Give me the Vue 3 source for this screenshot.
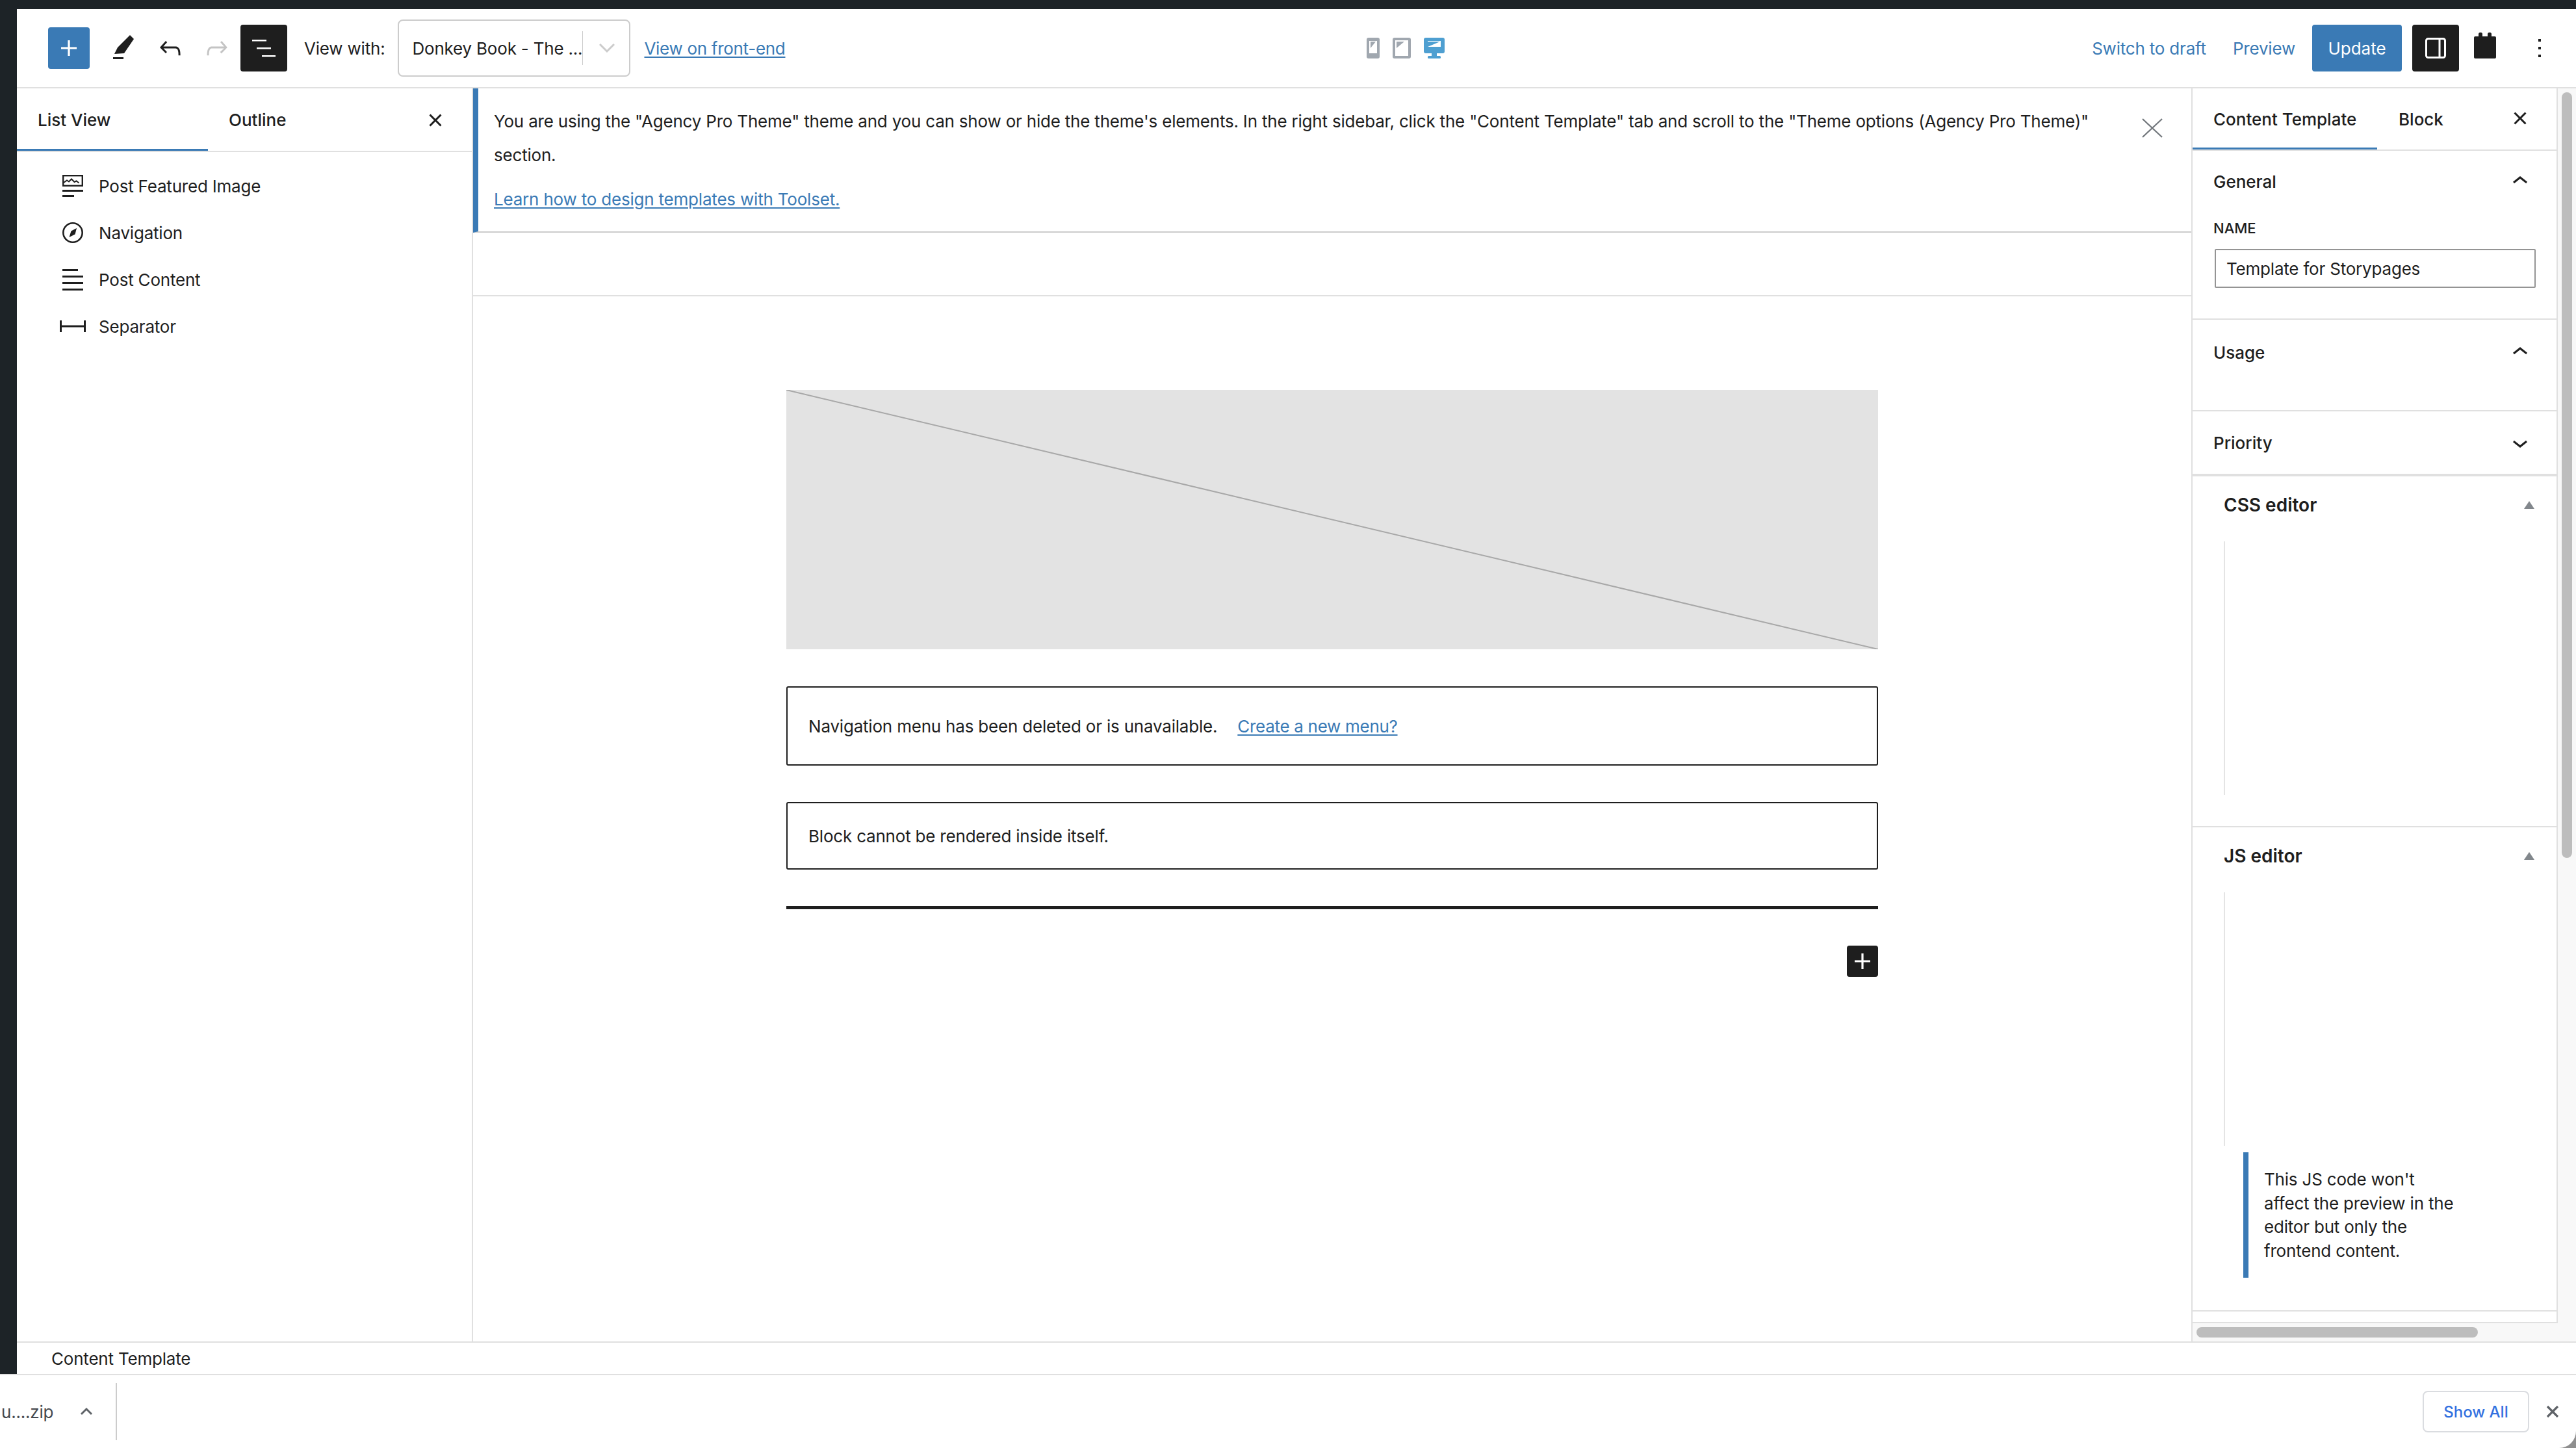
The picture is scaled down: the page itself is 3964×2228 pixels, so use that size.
<script setup>
const listItems = [
  { id: 'image', label: 'Post Featured Image' },
  { id: 'nav', label: 'Navigation' },
  { id: 'content', label: 'Post Content' },
  { id: 'sep', label: 'Separator' },
]
</script>

<template>
  <div class="window">
    <div class="top-strip" />
    <div class="middle">
      <div class="rail" />
      <div class="editor">
        <header class="toolbar">
          <div class="tools">
            <button class="inserter" type="button" aria-label="Add block">
              <svg width="48" height="48" viewBox="0 0 24 24" fill="#fff"><path d="M18 11.200h-5.200V6h-1.600v5.200H6v1.600h5.200V18h1.600v-5.200H18z" /></svg>
            </button>
            <svg class="tool tool--pen" width="48" height="48" viewBox="0 0 24 24" fill="#1e1e1e"><path d="M17 2l3 3-7.500 11-7.500.5 2.500-5z" /><rect x="4" y="19" width="8" height="1.500" /></svg>
            <svg class="tool" width="48" height="48" viewBox="0 0 24 24" fill="#1e1e1e"><path d="M18.300 11.700c-.6-.6-1.400-.9-2.300-.9H6.700l2.900-3.300-1.100-1-4.500 5L8.500 16l1-1-2.700-2.700H16c.5 0 .9.2 1.300.5 1 1 1 3.400 1 4.500v.3h1.500v-.2c0-1.500 0-4.300-1.500-5.700z" /></svg>
            <svg class="tool" width="48" height="48" viewBox="0 0 24 24" fill="#c4c4c4"><path d="M15.600 6.500l-1.100 1 2.900 3.300H8c-.9 0-1.700.3-2.300.9-1.400 1.500-1.400 4.200-1.400 5.700v.2h1.500v-.3c0-1.100 0-3.500 1-4.500.3-.3.7-.5 1.300-.5h9.200L14.300 15l1.100 1.100 4.500-4.600-4.300-5z" /></svg>
            <button class="dark-btn dark-btn--list" type="button" aria-label="List view">
              <svg width="72" height="72" viewBox="0 0 72 72" fill="#fff">
                <rect x="18" y="23" width="22" height="2.500" />
                <rect x="25" y="35" width="22" height="2.500" />
                <rect x="33" y="47" width="21" height="2.500" />
              </svg>
            </button>
            <span class="view-with">View with:</span>
            <div class="select">
              <span class="select__value">Donkey Book - The ...</span>
              <span class="select__divider" />
              <svg width="24" height="16" viewBox="0 0 24 16" fill="none" stroke="#ccc" stroke-width="3"><path d="M1 2l11 11L23 2" /></svg>
            </div>
            <a class="link view-front" href="#">View on front-end</a>
          </div>

          <div class="devices">
            <svg width="20" height="32" viewBox="0 0 20 32"><rect width="20" height="32" rx="3" fill="#a0a7af" /><rect x="4" y="5" width="12" height="19" fill="#fff" /><path d="M6 6h8l-8 10z" fill="#a0a7af" /></svg>
            <svg width="28" height="32" viewBox="0 0 28 32"><rect width="28" height="32" rx="3" fill="#a0a7af" /><rect x="4" y="4" width="20" height="24" fill="#fff" /><path d="M6 6h12L6 16z" fill="#a0a7af" /></svg>
            <svg width="32" height="32" viewBox="0 0 32 32" fill="#4e9fd1"><rect width="32" height="24" rx="3" /><rect x="6" y="5" width="20" height="9" fill="#fff" /><path d="M6 6h19L6 14z" /><rect x="12" y="24" width="8" height="5" /><rect x="6" y="28" width="20" height="4" rx="1.500" /></svg>
          </div>

          <div class="actions">
            <a class="action-link" href="#">Switch to draft</a>
            <a class="action-link action-link--preview" href="#">Preview</a>
            <button class="update" type="button">Update</button>
            <button class="dark-btn dark-btn--sidebar" type="button" aria-label="Settings">
              <svg width="72" height="72" viewBox="0 0 72 72" fill="none" stroke="#fff" stroke-width="3"><rect x="21.500" y="21.500" width="29" height="29" rx="3" /><path d="M42 21v30" /></svg>
            </button>
            <svg class="plugin" width="34" height="40" viewBox="0 0 34 40" fill="#1e1e1e"><rect x="7" y="0" width="6" height="10" rx="2.500" /><rect x="21" y="0" width="6" height="10" rx="2.500" /><rect x="0" y="6" width="34" height="34" rx="2" /></svg>
            <svg class="dots" width="4" height="28" viewBox="0 0 4 28" fill="#1e1e1e"><rect width="4" height="4" /><rect y="12" width="4" height="4" /><rect y="24" width="4" height="4" /></svg>
          </div>
        </header>

        <div class="workspace">
          <aside class="left-panel">
            <div class="left-tabs">
              <span class="left-tab left-tab--active">List View</span>
              <span class="left-tab">Outline</span>
              <svg class="left-close" width="48" height="48" viewBox="0 0 24 24" fill="#1e1e1e"><path d="M12 13.060l3.712 3.713 1.061-1.060L13.061 12l3.712-3.712-1.060-1.060L12 10.938 8.288 7.227l-1.061 1.060L10.939 12l-3.712 3.712 1.060 1.061L12 13.061z" /></svg>
            </div>
            <ul class="outline">
              <li v-for="item in listItems" :key="item.id" class="outline__row">
                <span class="outline__icon">
                  <svg v-if="item.id === 'image'" width="32" height="34" viewBox="0 0 32 34" fill="#1e1e1e">
                    <rect x="1.200" y="1.200" width="29.600" height="15.600" fill="none" stroke="#1e1e1e" stroke-width="2.400" />
                    <path d="M2 12l5-3.500 3 2 4-4 4.500 4.500 3-1.500 4 3" fill="none" stroke="#1e1e1e" stroke-width="2" />
                    <rect y="23" width="32" height="3" />
                    <rect y="31" width="18" height="3" />
                  </svg>
                  <svg v-else-if="item.id === 'nav'" width="32" height="32" viewBox="0 0 32 32" fill="#1e1e1e">
                    <circle cx="16" cy="16" r="14.700" fill="none" stroke="#1e1e1e" stroke-width="2.600" />
                    <path d="M22 9l-2.500 9.500L10.500 23l3-9.500z" />
                  </svg>
                  <svg v-else-if="item.id === 'content'" width="32" height="33" viewBox="0 0 32 33" fill="#1e1e1e">
                    <rect width="24" height="3" />
                    <rect y="10" width="32" height="3" />
                    <rect y="20" width="32" height="3" />
                    <rect y="30" width="32" height="3" />
                  </svg>
                  <svg v-else width="40" height="18" viewBox="0 0 40 18" fill="#1e1e1e">
                    <rect width="3" height="18" />
                    <rect x="37" width="3" height="18" />
                    <rect y="7.500" width="40" height="3" />
                  </svg>
                </span>
                <span>{{ item.label }}</span>
              </li>
            </ul>
          </aside>

          <main class="canvas">
            <div class="notice">
              <div class="notice__body">
                <p class="notice__text">You are using the "Agency Pro Theme" theme and you can show or hide the theme's elements. In the right sidebar, click the "Content Template" tab and scroll to the "Theme options (Agency Pro Theme)" section.</p>
                <a class="link notice__link" href="#">Learn how to design templates with Toolset.</a>
              </div>
              <svg class="notice__close" width="32" height="30" viewBox="0 0 32 30" stroke="#72777c" stroke-width="2.200"><path d="M1 1l30 28M31 1L1 29" /></svg>
            </div>
            <div class="strip" />
            <div class="page">
              <div class="placeholder">
                <svg width="100%" height="100%" viewBox="0 0 100 100" preserveAspectRatio="none"><path d="M0 0L100 100" stroke="#a8a8a8" stroke-width="2" vector-effect="non-scaling-stroke" /></svg>
              </div>
              <div class="warning warning--nav">
                <span>Navigation menu has been deleted or is unavailable.</span>
                <a class="link warning__link" href="#">Create a new menu?</a>
              </div>
              <div class="warning warning--self">Block cannot be rendered inside itself.</div>
              <div class="separator" />
              <button class="block-add" type="button" aria-label="Add block">
                <svg width="48" height="48" viewBox="0 0 24 24" fill="#fff"><path d="M18 11.200h-5.200V6h-1.600v5.200H6v1.600h5.200V18h1.600v-5.200H18z" /></svg>
              </button>
            </div>
          </main>

          <aside class="right-panel">
            <div class="right-main">
              <div class="settings">
                <div class="right-tabs">
                  <span class="right-tab right-tab--active">Content Template</span>
                  <span class="right-tab right-tab--block">Block</span>
                  <svg class="right-close" width="48" height="48" viewBox="0 0 24 24" fill="#1e1e1e"><path d="M12 13.060l3.712 3.713 1.061-1.060L13.061 12l3.712-3.712-1.060-1.060L12 10.938 8.288 7.227l-1.061 1.060L10.939 12l-3.712 3.712 1.060 1.061L12 13.061z" /></svg>
                </div>

                <section class="section section--general">
                  <div class="section__head">
                    <span>General</span>
                    <svg width="48" height="48" viewBox="0 0 24 24" fill="#1e1e1e"><path d="M6.500 12.400L12 8l5.500 4.400-.9 1.200L12 10l-4.500 3.600-1-1.200z" /></svg>
                  </div>
                  <label class="field-label">NAME</label>
                  <div class="field">Template for Storypages</div>
                </section>

                <section class="section section--usage">
                  <div class="section__head">
                    <span>Usage</span>
                    <svg width="48" height="48" viewBox="0 0 24 24" fill="#1e1e1e"><path d="M6.500 12.400L12 8l5.500 4.400-.9 1.200L12 10l-4.500 3.600-1-1.200z" /></svg>
                  </div>
                </section>

                <section class="section section--priority">
                  <div class="section__head">
                    <span>Priority</span>
                    <svg width="48" height="48" viewBox="0 0 24 24" fill="#1e1e1e"><path d="M17.500 11.600L12 16l-5.500-4.400.9-1.200L12 14l4.500-3.600 1 1.200z" /></svg>
                  </div>
                </section>

                <section class="metabox metabox--css">
                  <div class="metabox__head">
                    <span>CSS editor</span>
                    <i class="metabox__arrow" />
                  </div>
                  <div class="code-area" />
                </section>

                <section class="metabox metabox--js">
                  <div class="metabox__head">
                    <span>JS editor</span>
                    <i class="metabox__arrow" />
                  </div>
                  <div class="code-area" />
                  <p class="js-note">This JS code won't affect the preview in the editor but only the frontend content.</p>
                </section>

                <div class="clipped-row" />
              </div>
              <div class="v-track"><div class="v-thumb" /></div>
            </div>
            <div class="h-track"><div class="h-thumb" /></div>
          </aside>
        </div>

        <footer class="breadcrumb">Content Template</footer>
      </div>
    </div>

    <div class="downloads">
      <span class="downloads__file">u....zip</span>
      <svg class="downloads__chevron" width="20" height="14" viewBox="0 0 20 14" fill="none" stroke="#5f6368" stroke-width="3"><path d="M2 11l8-8 8 8" /></svg>
      <span class="downloads__divider" />
      <button class="show-all" type="button">Show All</button>
      <svg class="downloads__close" width="20" height="20" viewBox="0 0 20 20" stroke="#5f6368" stroke-width="3.200"><path d="M2 2l16 16M18 2L2 18" /></svg>
    </div>
  </div>
</template>

<style scoped>
.window {
  display: flex;
  flex-direction: column;
  width: 3964px;
  height: 2228px;
  overflow: hidden;
  background: #8f8f8f;
  color: #1e1e1e;
  font-family: Inter, "Liberation Sans", sans-serif;
  font-size: 26px;
  letter-spacing: -0.2px;
}

button {
  padding: 0;
  border: none;
  font: inherit;
  cursor: pointer;
}

a {
  text-decoration: none;
}

.top-strip {
  flex: none;
  height: 14px;
  background: #1d2327;
}

.middle {
  display: flex;
  flex: 1;
  min-height: 0;
}

.rail {
  flex: none;
  width: 26px;
  background: #1d2327;
}

.editor {
  display: flex;
  flex: 1;
  flex-direction: column;
  min-width: 0;
  background: #fff;
}

.toolbar {
  display: grid;
  flex: none;
  grid-template-columns: 2029px 120px 1fr;
  align-items: center;
  height: 122px;
  padding-left: 48px;
  border-bottom: 2px solid #e0e0e0;
  box-sizing: border-box;
}

.tools {
  display: flex;
  align-items: center;
}

.inserter {
  display: flex;
  align-items: center;
  justify-content: center;
  width: 64px;
  height: 64px;
  margin-right: 28px;
  border-radius: 4px;
  background: #3a7ab5;
}

.tool {
  flex: none;
  margin-right: 24px;
}

.tool:nth-of-type(3) {
  margin-right: 12px;
}

.dark-btn {
  display: flex;
  flex: none;
  width: 72px;
  height: 72px;
  border-radius: 4px;
  background: #1e1e1e;
}

.view-with {
  margin-left: 26px;
  white-space: nowrap;
}

.select {
  display: flex;
  flex: none;
  align-items: center;
  box-sizing: border-box;
  width: 358px;
  height: 88px;
  margin-left: 20px;
  padding-left: 20px;
  border: 2px solid #ccc;
  border-radius: 8px;
}

.select__value {
  width: 262px;
  white-space: nowrap;
}

.select__divider {
  width: 1px;
  height: 52px;
  margin-right: 25px;
  background: #ccc;
}

.link {
  color: #3a7ab5;
  text-decoration: underline;
  text-underline-offset: 3px;
}

.view-front {
  margin-left: 21px;
  letter-spacing: -0.3px;
  white-space: nowrap;
}

.devices {
  display: flex;
  align-items: center;
  gap: 20px;
}

.actions {
  display: flex;
  align-items: center;
  justify-content: flex-end;
  padding-right: 54px;
}

.action-link {
  color: #3a7ab5;
  white-space: nowrap;
}

.action-link--preview {
  margin-left: 41px;
}

.update {
  width: 138px;
  height: 72px;
  margin-left: 26px;
  border-radius: 4px;
  background: #3a7ab5;
  color: #fff;
}

.dark-btn--sidebar {
  margin-left: 16px;
}

.plugin {
  flex: none;
  margin-left: 23px;
  transform: translateY(-4px);
}

.dots {
  flex: none;
  margin-left: 65px;
}

.workspace {
  display: flex;
  flex: 1;
  min-height: 0;
}

.left-panel {
  flex: none;
  box-sizing: border-box;
  width: 702px;
  border-right: 2px solid #e0e0e0;
}

.left-tabs {
  position: relative;
  display: flex;
  height: 98px;
  border-bottom: 2px solid #e0e0e0;
  box-sizing: border-box;
}

.left-tab {
  box-sizing: border-box;
  width: 294px;
  height: 96px;
  padding: 34px 0 0 32px;
  font-weight: 500;
  letter-spacing: 0;
  line-height: 30px;
}

.left-tab--active {
  border-bottom: 3px solid #3a7ab5;
}

.left-close {
  position: absolute;
  top: 25px;
  left: 620px;
}

.outline {
  margin: 0;
  padding: 16px 0 0 66px;
  list-style: none;
}

.outline__row {
  display: flex;
  align-items: center;
  gap: 20px;
  height: 72px;
}

.outline__icon {
  display: flex;
  align-items: center;
  justify-content: center;
  width: 40px;
}

.canvas {
  flex: 1;
  min-width: 0;
}

.notice {
  display: flex;
  justify-content: space-between;
  box-sizing: border-box;
  height: 222px;
  padding: 25px 44px 0 24px;
  border-left: 8px solid #3a7ab5;
  border-bottom: 2px solid #ccc;
}

.notice__body {
  width: 2500px;
}

.notice__text {
  margin: 0 0 16px;
  line-height: 52px;
}

.notice__link {
  line-height: 52px;
}

.notice__close {
  margin-top: 21px;
}

.strip {
  height: 98px;
  box-sizing: border-box;
  border-bottom: 2px solid #e0e0e0;
}

.page {
  display: flex;
  flex-direction: column;
  width: 1680px;
  margin: 0 auto;
  padding-top: 144px;
}

.placeholder {
  height: 399px;
  background: #e3e3e3;
}

.placeholder svg {
  display: block;
}

.warning {
  display: flex;
  align-items: center;
  box-sizing: border-box;
  padding-left: 32px;
  border: 2px solid #1e1e1e;
  border-radius: 3px;
}

.warning--nav {
  height: 122px;
  margin-top: 57px;
}

.warning--self {
  height: 104px;
  margin-top: 56px;
}

.warning__link {
  margin-left: 31px;
  letter-spacing: -0.3px;
}

.separator {
  height: 5px;
  margin-top: 56px;
  background: #1e1e1e;
}

.block-add {
  display: flex;
  align-self: flex-end;
  width: 48px;
  height: 48px;
  margin-top: 56px;
  border-radius: 4px;
  background: #1e1e1e;
}

.right-panel {
  display: flex;
  flex: none;
  flex-direction: column;
  box-sizing: border-box;
  width: 592px;
  border-left: 2px solid #e0e0e0;
}

.right-main {
  display: flex;
  flex: 1;
  min-height: 0;
}

.settings {
  flex: none;
  box-sizing: border-box;
  width: 562px;
  border-right: 2px solid #e0e0e0;
  border-bottom: 2px solid #e0e0e0;
}

.right-tabs {
  position: relative;
  display: flex;
  box-sizing: border-box;
  height: 96px;
  border-bottom: 2px solid #e0e0e0;
}

.right-tab {
  box-sizing: border-box;
  height: 94px;
  padding-top: 33px;
  font-weight: 500;
  letter-spacing: 0;
  line-height: 30px;
}

.right-tab--active {
  width: 284px;
  padding-left: 32px;
  border-bottom: 3px solid #3a7ab5;
}

.right-tab--block {
  padding-left: 33px;
}

.right-close {
  position: absolute;
  top: 22px;
  right: 32px;
}

.section {
  box-sizing: border-box;
  padding: 0 32px;
  border-bottom: 2px solid #e0e0e0;
}

.section--general {
  height: 260px;
}

.section--usage {
  height: 141px;
  padding-top: 3px;
}

.section--priority {
  height: 100px;
  padding-top: 1px;
  border-bottom-width: 4px;
}

.section__head {
  display: flex;
  align-items: center;
  justify-content: space-between;
  height: 94px;
  font-weight: 500;
  letter-spacing: 0;
}

.field-label {
  display: block;
  margin-top: 12px;
  font-size: 22px;
  font-weight: 500;
  letter-spacing: 0;
  line-height: 26px;
}

.field {
  box-sizing: border-box;
  width: 494px;
  height: 60px;
  margin: 19px 0 0 2px;
  padding-left: 16px;
  border: 2px solid #949494;
  border-radius: 2px;
  line-height: 58px;
  white-space: nowrap;
}

.metabox {
  box-sizing: border-box;
  padding: 0 0 0 48px;
}

.metabox--css {
  height: 540px;
  border-bottom: 2px solid #e0e0e0;
}

.metabox--js {
  height: 745px;
  border-bottom: 2px solid #e0e0e0;
}

.metabox__head {
  display: flex;
  align-items: center;
  justify-content: space-between;
  height: 88px;
  padding-right: 34px;
  font-size: 28px;
  font-weight: 600;
  letter-spacing: 0;
}

.metabox__arrow {
  width: 0;
  height: 0;
  border-right: 8px solid transparent;
  border-bottom: 12px solid #82878c;
  border-left: 8px solid transparent;
}

.code-area {
  width: 2px;
  height: 390px;
  margin-top: 12px;
  background: #e4e4e4;
}

.js-note {
  box-sizing: border-box;
  width: 330px;
  height: 193px;
  margin: 10px 0 0 30px;
  padding: 24px 0 0 24px;
  border-left: 8px solid #3a7ab5;
  line-height: 36.500px;
}

.clipped-row {
  height: 14px;
}

.v-track {
  flex: 1;
  padding: 6px 6px 0;
  background: #f8f8f8;
}

.v-thumb {
  height: 1178px;
  border-radius: 8px;
  background: #bdbdbd;
}

.h-track {
  flex: none;
  height: 28px;
  padding: 6px 0 0 6px;
  box-sizing: border-box;
  background: #f8f8f8;
}

.h-thumb {
  width: 433px;
  height: 16px;
  border-radius: 8px;
  background: #bdbdbd;
}

.breadcrumb {
  flex: none;
  box-sizing: border-box;
  height: 50px;
  padding-left: 53px;
  border-top: 2px solid #e0e0e0;
  line-height: 50px;
}

.downloads {
  display: flex;
  flex: none;
  align-items: center;
  box-sizing: border-box;
  height: 114px;
  border-top: 2px solid #e0e0e0;
  border-bottom-right-radius: 26px;
  background: #fff;
}

.downloads__file {
  margin-left: 2px;
  color: #45494f;
  white-space: nowrap;
}

.downloads__chevron {
  margin-left: 41px;
}

.downloads__divider {
  width: 2px;
  height: 88px;
  margin-left: 35px;
  background: #ccc;
}

.show-all {
  width: 164px;
  height: 64px;
  margin-left: auto;
  border: 2px solid #dadce0;
  border-radius: 8px;
  background: #fff;
  color: #3371e0;
  font-size: 24px;
  font-weight: 500;
}

.downloads__close {
  margin: 0 26px 0 26px;
}
</style>

<style>
body {
  margin: 0;
  overflow: hidden;
}
</style>
